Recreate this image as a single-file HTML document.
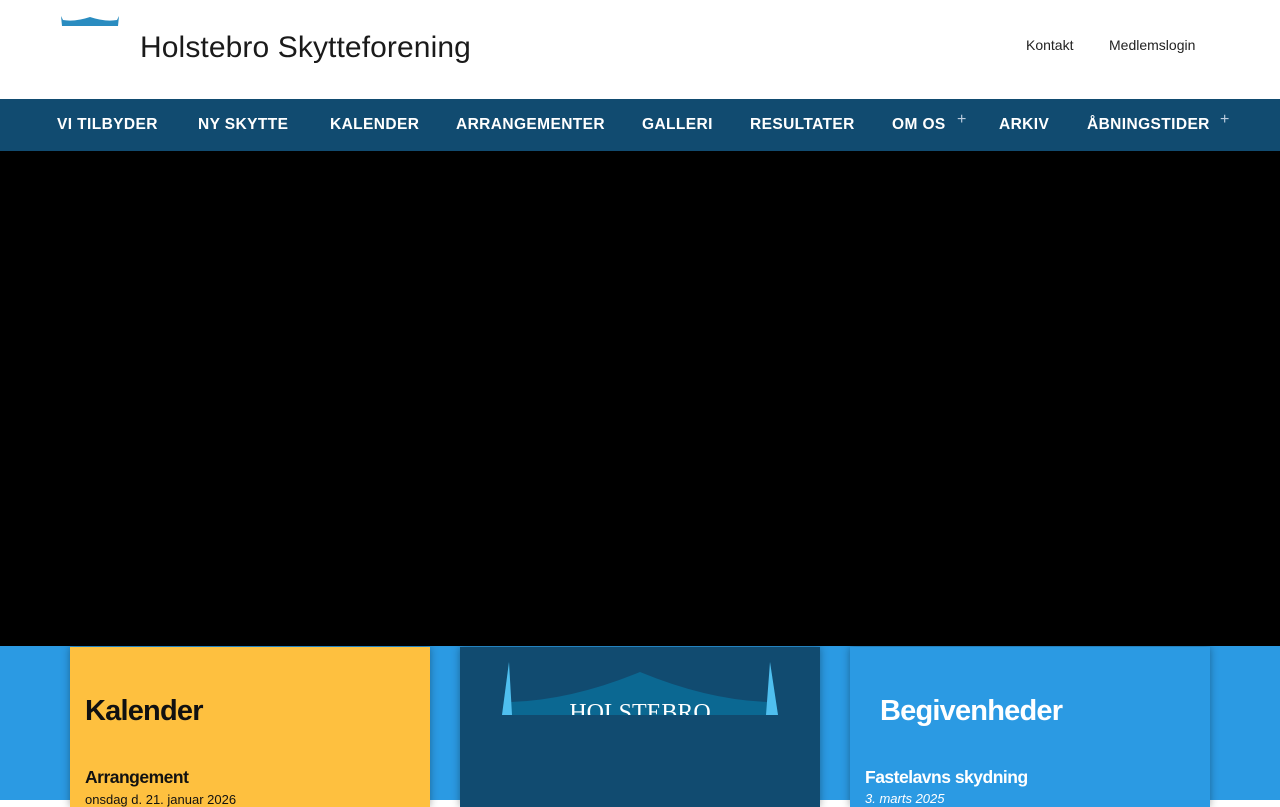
<!DOCTYPE html>
<html><head><meta charset="utf-8"><style>
*{margin:0;padding:0;box-sizing:border-box}
body{width:1280px;height:800px;overflow:hidden;background:#fff;font-family:"Liberation Sans",sans-serif;position:relative}
.title{position:absolute;left:140px;top:31px;font-size:30px;color:#1a1a1a;letter-spacing:.1px}
.top{position:absolute;top:37px;font-size:14px;color:#222}
nav{position:absolute;top:99px;left:0;width:1280px;height:52px;background:#114b70}
nav span{position:absolute;top:17px;color:#fff;font-weight:bold;font-size:15.5px;letter-spacing:.4px}
nav i{position:absolute;top:12px;color:#bcd;font-style:normal;font-size:16px}
.hero{position:absolute;top:151px;left:0;width:1280px;height:495px;background:#000}
.band{position:absolute;top:646px;left:0;width:1280px;height:154px;background:#2b9ae3}
.card{position:absolute;top:647px;width:360px;height:160px;box-shadow:0 0 8px rgba(0,0,0,.35)}
h2{position:absolute;font-size:29px;font-weight:bold;letter-spacing:-.8px}
h3{position:absolute;font-size:17.5px;font-weight:bold;letter-spacing:-.5px}
.d{position:absolute;font-size:13px}
</style></head><body>
<svg style="position:absolute;left:60px;top:16px" width="60" height="12" viewBox="0 0 60 12"><path d="M1 0 L2 10 L58 10 L59 0 L57 4 Q45 6 30 1 Q15 6 3 4Z" fill="#2a8cc0"/></svg>
<div class="title">Holstebro Skytteforening</div>
<div class="top" style="left:1026px">Kontakt</div>
<div class="top" style="left:1109px">Medlemslogin</div>
<nav>
<span style="left:57px">VI TILBYDER</span>
<span style="left:198px">NY SKYTTE</span>
<span style="left:330px">KALENDER</span>
<span style="left:456px">ARRANGEMENTER</span>
<span style="left:642px">GALLERI</span>
<span style="left:750px">RESULTATER</span>
<span style="left:892px">OM OS</span><i style="left:957px">+</i>
<span style="left:999px">ARKIV</span>
<span style="left:1087px">ÅBNINGSTIDER</span><i style="left:1220px">+</i>
</nav>
<div class="hero"></div>
<div class="band"></div>
<div class="card" style="left:70px;background:#fec03f;color:#111">
<h2 style="left:15px;top:48px">Kalender</h2>
<h3 style="left:15px;top:120px">Arrangement</h3>
<div class="d" style="left:15px;top:145px">onsdag d. 21. januar 2026</div>
</div>
<div class="card" style="left:460px;background:#114b70">
<svg style="position:absolute;left:42px;top:15px" width="276" height="53" viewBox="0 0 276 53"><path d="M0 53 L7 0 L9 40 Q70 38 138 10 Q206 38 266 40 L268 0 L276 53Z" fill="#0b6892"/><path d="M0 53 L7 0 L10 53Z M276 53 L268 0 L264 53Z" fill="#4fbfef"/><text x="138" y="58" text-anchor="middle" fill="#fff" font-family="Liberation Serif" font-size="24">HOLSTEBRO</text></svg>
</div>
<div class="card" style="left:850px;background:#2b9ae3;color:#fff">
<h2 style="left:30px;top:48px">Begivenheder</h2>
<h3 style="left:15px;top:120px">Fastelavns skydning</h3>
<div class="d" style="left:15px;top:144px;font-style:italic">3. marts 2025</div>
</div>
</body></html>
